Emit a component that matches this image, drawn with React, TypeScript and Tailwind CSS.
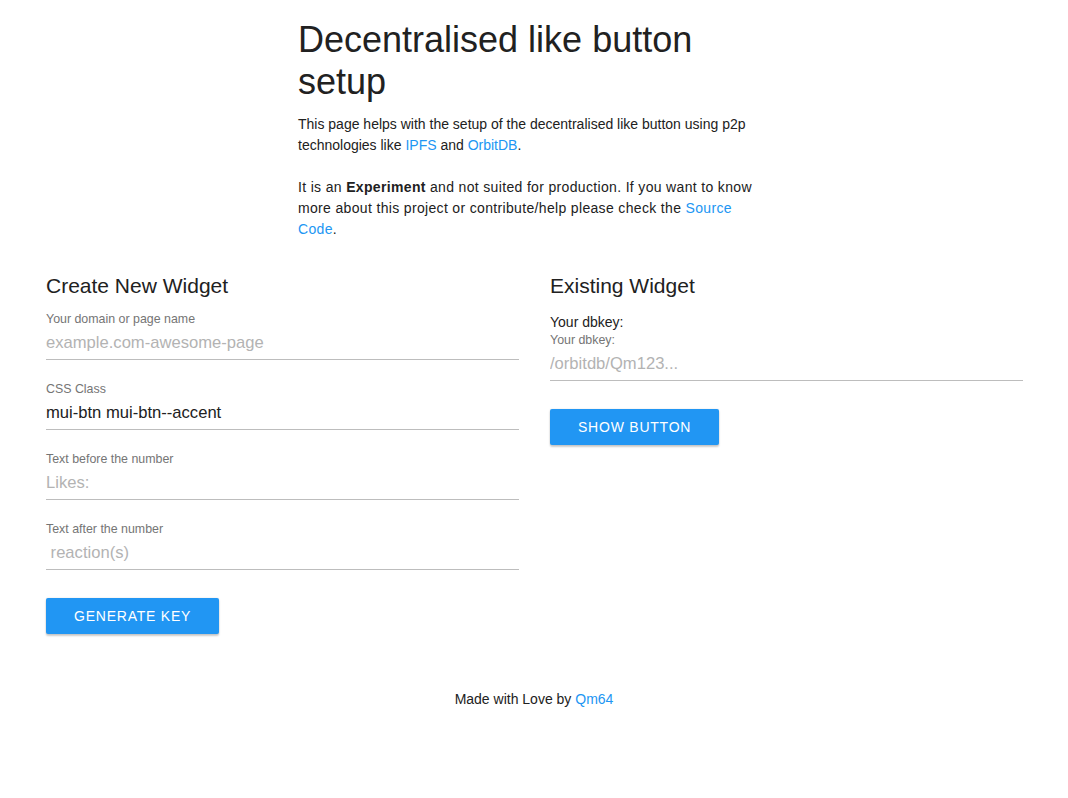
function Field({ label, placeholder, value }: { label: string; placeholder?: string; value?: string }) {
  return (
    <div className="mb-[22px] flex flex-col">
      <label className="h-[15px] text-[12.4px] leading-[15px] text-[#757575]">{label}</label>
      <input
        className="h-[33px] w-full border-b border-[#bdbdbd] bg-transparent text-[16.6px] text-[#212121] outline-none placeholder:text-[#b3b3b3]"
        placeholder={placeholder}
        defaultValue={value}
      />
    </div>
  );
}

function Button({ children }: { children: string }) {
  return (
    <button className="mt-[6px] mb-[6px] h-[36px] rounded-[2px] bg-[#2196f3] px-[28px] pt-[1px] text-[14px] uppercase tracking-[0.055em] text-white shadow-[0_0_2px_rgba(0,0,0,0.12),0_2px_2px_rgba(0,0,0,0.2)]">
      {children}
    </button>
  );
}

export default function App() {
  return (
    <div className="min-h-[798px] bg-white font-['Liberation_Sans',Arial,sans-serif] text-[#212121]">
      <div className="mx-auto w-[472px] pt-[19px]">
        <h1 className="mb-[11px] text-[36px] leading-[42px]">Decentralised like button setup</h1>
        <p className="mb-[21px] text-[14px] leading-[21px]">
          This page helps with the setup of the decentralised like button using p2p
          <br />
          technologies like <a className="text-[#2196f3]">IPFS</a> and <a className="text-[#2196f3]">OrbitDB</a>.
        </p>
        <p className="text-[14px] leading-[21px] tracking-[0.024em]">
          It is an <b>Experiment</b> and not suited for production. If you want to know
          <br />
          more about this project or contribute/help please check the <a className="text-[#2196f3]">Source</a>
          <br />
          <a className="text-[#2196f3]">Code</a>.
        </p>
      </div>

      <div className="mt-[32px] grid grid-cols-[473px_473px] gap-x-[31px] pl-[46px]">
        <div>
          <h3 className="mb-[12px] text-[21px] leading-[28px]">Create New Widget</h3>
          <Field label="Your domain or page name" placeholder="example.com-awesome-page" />
          <Field label="CSS Class" value="mui-btn mui-btn--accent" />
          <Field label="Text before the number" placeholder="Likes:" />
          <Field label="Text after the number" placeholder=" reaction(s)" />
          <Button>Generate Key</Button>
        </div>
        <div>
          <h3 className="mb-[12px] text-[21px] leading-[28px]">Existing Widget</h3>
          <div className="text-[14px] leading-[21px]">Your dbkey:</div>
          <Field label="Your dbkey:" placeholder="/orbitdb/Qm123..." />
          <Button>Show Button</Button>
        </div>
      </div>

      <footer className="mt-[49px] text-center text-[14px] leading-[21px]">
        Made with Love by <a className="text-[#2196f3]">Qm64</a>
      </footer>
    </div>
  );
}
